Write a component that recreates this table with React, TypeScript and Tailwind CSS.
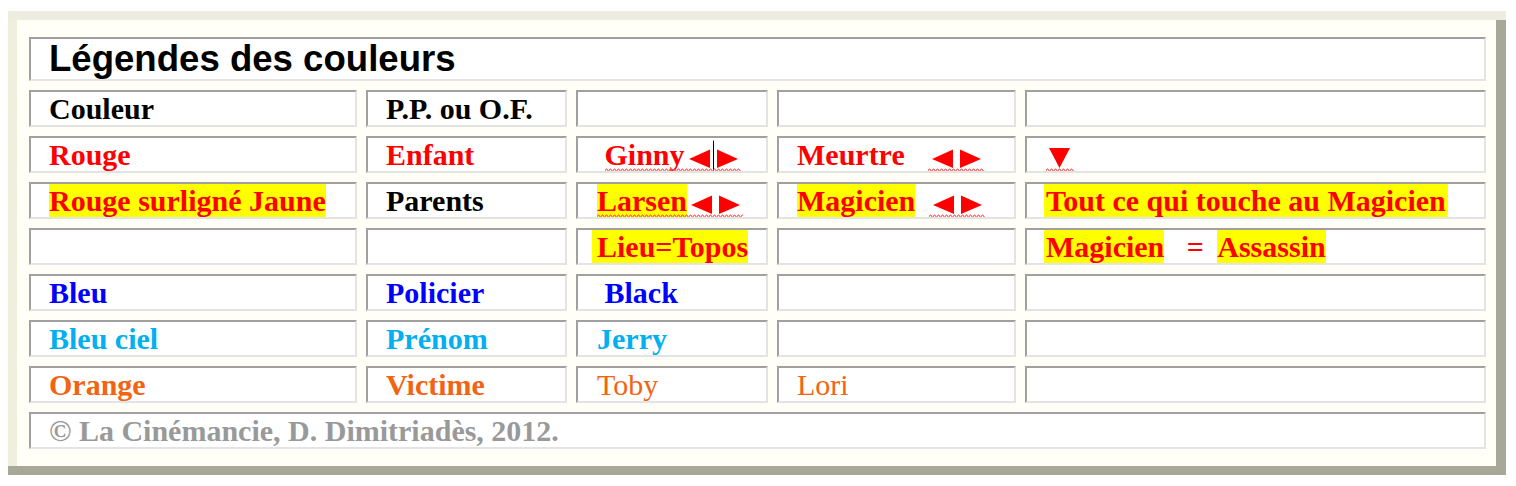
import { useId, type ReactNode } from 'react'

const cellBase =
  'h-[37px] border-2 border-t-[#a0a0a0] border-l-[#a0a0a0] border-b-[#e3e3e3] border-r-[#e3e3e3] bg-white leading-[33px] whitespace-pre overflow-hidden'

function Cell({ children, className = '' }: { children?: ReactNode; className?: string }) {
  return <div className={`${cellBase} ${className}`}>{children}</div>
}

function Squiggle({ children }: { children: ReactNode }) {
  const id = 'sq' + useId().replace(/[^a-zA-Z0-9]/g, '')
  return (
    <span className="relative inline-block">
      {children}
      <svg className="absolute left-0 bottom-[-1px] w-full h-[4px]" aria-hidden>
        <defs>
          <pattern id={id} width="4" height="4" patternUnits="userSpaceOnUse">
            <path d="M0 3 L1 1 L2 1 L3 3 L4 3" stroke="#ff5050" strokeWidth="1" fill="none" />
          </pattern>
        </defs>
        <rect width="100%" height="4" fill={`url(#${id})`} />
      </svg>
    </span>
  )
}

function Arrow({ dir, caret = false }: { dir: 'left' | 'right'; caret?: boolean }) {
  return (
    <svg width="28" height="20" viewBox="0 0 28 20" className="inline-block overflow-visible">
      {dir === 'left' ? (
        <polygon points="4,11 25,1.5 25,20" fill="#ff0000" />
      ) : (
        <polygon points="4,1.5 25,11 4,20" fill="#ff0000" />
      )}
      {caret && <line x1="0.5" y1="-7.4" x2="0.5" y2="27.6" stroke="#000" strokeWidth="1" />}
    </svg>
  )
}

function Down() {
  return (
    <svg width="28" height="22" viewBox="0 0 28 22" className="inline-block">
      <polygon points="3,1 24,1 13.5,21" fill="#ff0000" />
    </svg>
  )
}

function Hl({ children, className = '' }: { children: ReactNode; className?: string }) {
  return <span className={`bg-[#ffff00] py-[1px] ${className}`}>{children}</span>
}

export default function App() {
  return (
    <div className="bg-white w-[1516px] h-[486px] pt-[11px] pl-[8px]">
      <div className="w-[1498px] border-t-[9px] border-t-[#ecedde] border-b-[9px] border-b-[#a7a898]">
        <div className="h-[446px] border-l-[9px] border-l-[#eef0dd] border-r-[10px] border-r-[#a7a898] bg-[#fffff8] pl-[12px] pt-[17px]">
          <div className="grid grid-cols-[328px_201px_192px_239px_461px] gap-[9px] font-['Liberation_Serif',serif] text-[30px] font-bold">
            <div className="col-span-5 h-[44px] border-2 border-t-[#a0a0a0] border-l-[#a0a0a0] border-b-[#e3e3e3] border-r-[#e3e3e3] bg-white pl-[18px] leading-[40px] font-['Liberation_Sans',Arial,sans-serif] text-[36.6px] text-black">
              Légendes des couleurs
            </div>

            <Cell className="pl-[18px] text-black">Couleur</Cell>
            <Cell className="pl-[18px] text-black">P.P. ou O.F.</Cell>
            <Cell className="pl-[19px]" />
            <Cell className="pl-[18px]" />
            <Cell className="pl-[19px]" />

            <Cell className="pl-[18px] text-[#ff0000]">Rouge</Cell>
            <Cell className="pl-[18px] text-[#ff0000]">Enfant</Cell>
            <Cell className="pl-[19px] text-[#ff0000]">
              {' '}
              <Squiggle>
                Ginny
                <Arrow dir="left" />
                <Arrow dir="right" caret />
              </Squiggle>
            </Cell>
            <Cell className="pl-[18px] text-[#ff0000]">
              Meurtre
              <span className="ml-[23px]">
                <Squiggle>
                  <Arrow dir="left" />
                  <Arrow dir="right" />
                </Squiggle>
              </span>
            </Cell>
            <Cell className="pl-[19px] text-[#ff0000]">
              <Squiggle>
                <Down />
              </Squiggle>
            </Cell>

            <Cell className="pl-[18px] text-[#ff0000]">
              <Hl>Rouge surligné Jaune</Hl>
            </Cell>
            <Cell className="pl-[18px] text-black">Parents</Cell>
            <Cell className="pl-[19px] text-[#ff0000]">
              <Squiggle>
                <Hl>Larsen</Hl>
                <Arrow dir="left" />
                <Arrow dir="right" />
              </Squiggle>
            </Cell>
            <Cell className="pl-[18px] text-[#ff0000]">
              <Hl>Magicien</Hl>
              <span className="ml-[14px]">
                <Squiggle>
                  <Arrow dir="left" />
                  <Arrow dir="right" />
                </Squiggle>
              </span>
            </Cell>
            <Cell className="pl-[19px] text-[#ff0000]">
              <Hl className="-ml-[2px] pl-[2px] pr-[2px]">Tout ce qui touche au Magicien</Hl>
            </Cell>

            <Cell className="pl-[18px]" />
            <Cell className="pl-[18px]" />
            <Cell className="pl-[19px] text-[#ff0000]">
              <Hl className="-ml-[5px] pl-[5px]">Lieu=Topos</Hl>
            </Cell>
            <Cell className="pl-[18px]" />
            <Cell className="pl-[19px] text-[#ff0000]">
              <Hl className="-ml-[2px] pl-[2px]">Magicien</Hl>
              {'   =  '}
              <Hl>Assassin</Hl>
            </Cell>

            <Cell className="pl-[18px] text-[#0000ff]">Bleu</Cell>
            <Cell className="pl-[18px] text-[#0000ff]">Policier</Cell>
            <Cell className="pl-[19px] text-[#0000ff]">{' Black'}</Cell>
            <Cell className="pl-[18px]" />
            <Cell className="pl-[19px]" />

            <Cell className="pl-[18px] text-[#00b0f0]">Bleu ciel</Cell>
            <Cell className="pl-[18px] text-[#00b0f0]">Prénom</Cell>
            <Cell className="pl-[19px] text-[#00b0f0]">Jerry</Cell>
            <Cell className="pl-[18px]" />
            <Cell className="pl-[19px]" />

            <Cell className="pl-[18px] text-[#f26411]">Orange</Cell>
            <Cell className="pl-[18px] text-[#f26411]">Victime</Cell>
            <Cell className="pl-[19px] text-[#f26411] font-normal">Toby</Cell>
            <Cell className="pl-[18px] text-[#f26411] font-normal">Lori</Cell>
            <Cell className="pl-[19px]" />

            <Cell className="col-span-5 pl-[18px] text-[#999999]">© La Cinémancie, D. Dimitriadès, 2012.</Cell>
          </div>
        </div>
      </div>
    </div>
  )
}
